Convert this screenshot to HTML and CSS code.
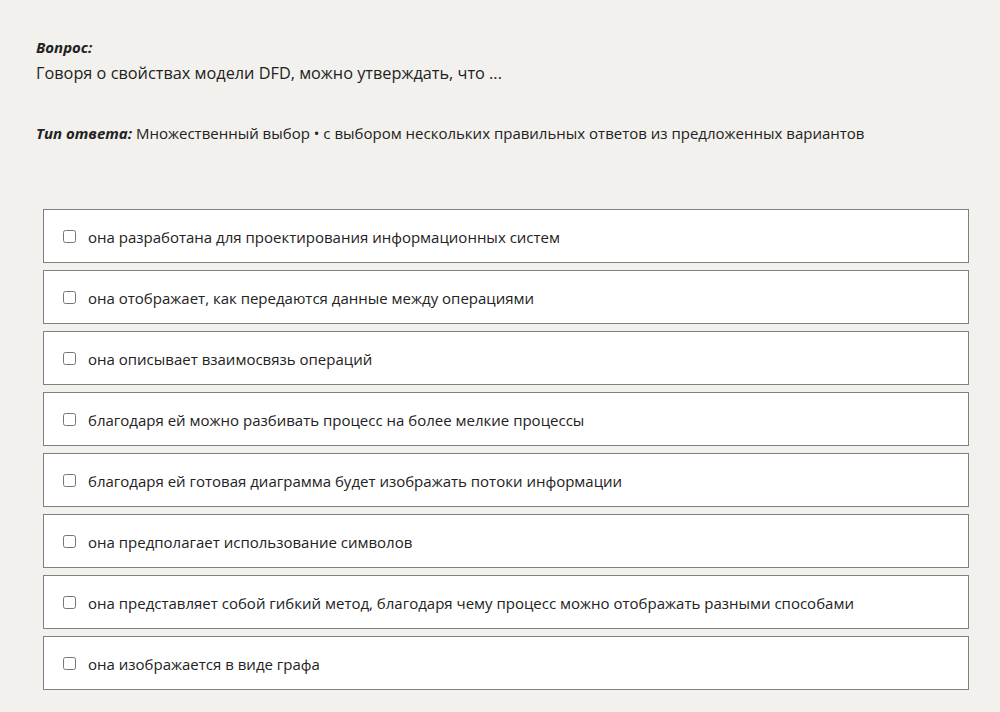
FILE: index.html
```
<!DOCTYPE html>
<html lang="ru">
<head>
  <meta charset="UTF-8">
  <title>Вопрос</title>
  <link rel="stylesheet" href="styles.css">
</head>
<body>
  <div class="page">
    <div class="label">Вопрос:</div>
    <div class="question">Говоря о свойствах модели DFD, можно утверждать, что ...</div>

    <div class="answer-type"><span class="label">Тип ответа:</span> Множественный выбор • с выбором нескольких правильных ответов из предложенных вариантов</div>

    <div class="options">
      <label class="option"><input type="checkbox"> она разработана для проектирования информационных систем</label>
      <label class="option"><input type="checkbox"> она отображает, как передаются данные между операциями</label>
      <label class="option"><input type="checkbox"> она описывает взаимосвязь операций</label>
      <label class="option"><input type="checkbox"> благодаря ей можно разбивать процесс на более мелкие процессы</label>
      <label class="option"><input type="checkbox"> благодаря ей готовая диаграмма будет изображать потоки информации</label>
      <label class="option"><input type="checkbox"> она предполагает использование символов</label>
      <label class="option"><input type="checkbox"> она представляет собой гибкий метод, благодаря чему процесс можно отображать разными способами</label>
      <label class="option"><input type="checkbox"> она изображается в виде графа</label>
    </div>
  </div>
</body>
</html>
```

FILE: styles.css
```
body {
  margin: 0;
  background: #f2f1ed;
  font-family: "Open Sans", "Noto Sans", sans-serif;
  color: #222;
}

.page {
  padding: 35px 31px 20px 36px;
}

.label {
  font-weight: bold;
  font-style: italic;
  font-size: 15px;
  line-height: 24px;
}

.question {
  font-size: 16.3px;
  line-height: 28px;
}

.answer-type {
  margin-top: 34px;
  font-size: 15px;
  line-height: 24px;
}

.options {
  margin: 64px 0 0 7px;
  display: flex;
  flex-direction: column;
  gap: 7px;
}

.option {
  display: flex;
  align-items: center;
  gap: 12px;
  height: 51px;
  padding: 1px 19px 0;
  background: #fff;
  border: 1px solid #808080;
  font-size: 15px;
}

.option input {
  margin: 0;
  width: 13px;
  height: 13px;
}
```
